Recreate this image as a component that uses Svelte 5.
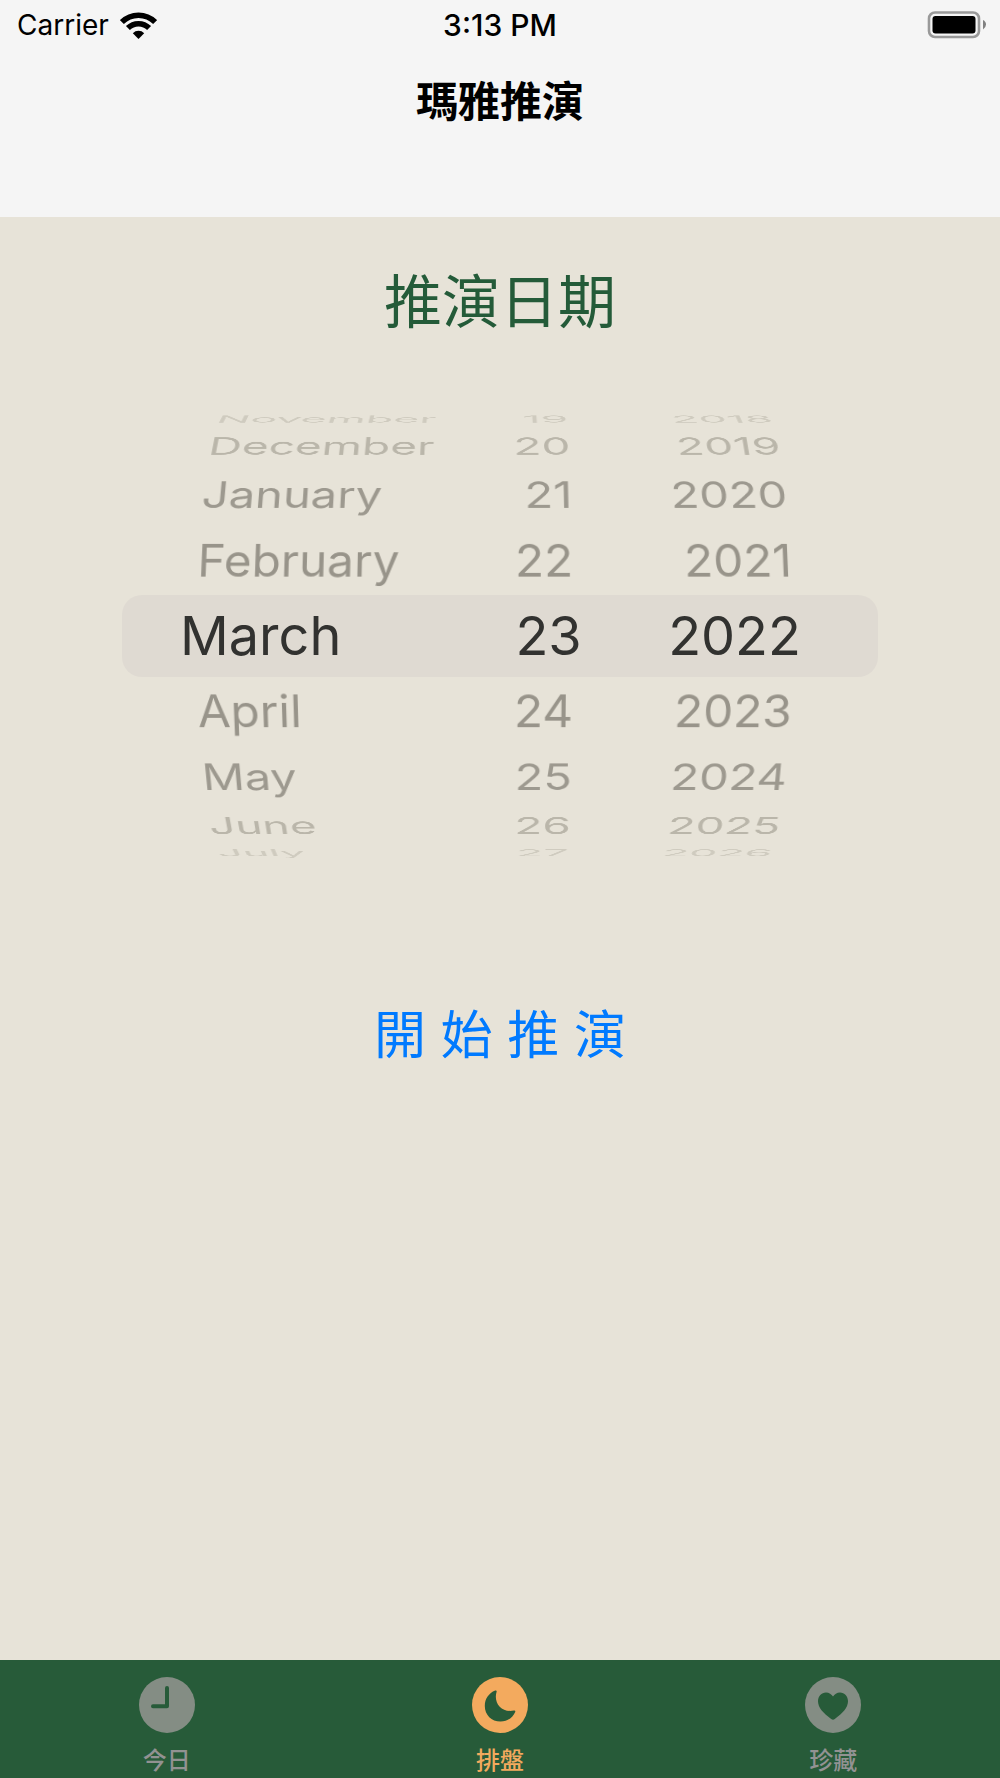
<script>
  const columns = [
    {
      name: 'month',
      label: 'Month',
      items: ['November', 'December', 'January', 'February', 'March', 'April', 'May', 'June', 'July'],
    },
    {
      name: 'day',
      label: 'Day',
      items: ['19', '20', '21', '22', '23', '24', '25', '26', '27'],
    },
    {
      name: 'year',
      label: 'Year',
      items: ['2018', '2019', '2020', '2021', '2022', '2023', '2024', '2025', '2026'],
    },
  ];

  const tabs = [
    { id: 'today', label: '今日' },
    { id: 'chart', label: '排盤' },
    { id: 'saved', label: '珍藏' },
  ];

  // Degrees between neighbouring rows on the picker drum
  const STEP = 18;

  let selected = $state({ month: 4, day: 4, year: 4 });
  let activeTab = $state('chart');
</script>

<div class="screen">
  <header>
    <div class="status">
      <div class="carrier">
        <span>Carrier</span>
        <svg class="wifi" viewBox="0 0 37 28" aria-hidden="true">
          <g fill="none" stroke="#000" stroke-width="5.6">
            <path d="M1.9 11.1A23.5 23.5 0 0 1 35.1 11.1" />
            <path d="M7.9 17.1A15 15 0 0 1 29.1 17.1" />
          </g>
          <path d="M18.5 28 12.8 22.2A8.1 8.1 0 0 1 24.2 22.2Z" />
        </svg>
      </div>
      <time>3:13 PM</time>
      <svg class="battery" viewBox="0 0 60 28" aria-hidden="true">
        <rect x="2" y="1.5" width="50" height="24.5" rx="6" fill="none" stroke="#999" stroke-width="2.6" />
        <rect x="5.500" y="5" width="43" height="17.6" rx="3" />
        <path d="M56 9Q59 10.500 59 13.500T56 18.500Z" fill="#808080" />
      </svg>
    </div>
    <h1>瑪雅推演</h1>
  </header>

  <main>
    <h2>推演日期</h2>

    <div class="picker">
      <div class="band"></div>
      <div class="drum">
        {#each columns as column}
          <div class="column {column.name}" role="radiogroup" aria-label={column.label}>
            {#each column.items as item, i}
              {@const offset = i - selected[column.name]}
              <label
                class="item away-{Math.min(Math.abs(offset), 5)}"
                style="--angle: {-offset * STEP}deg"
              >
                <input type="radio" name={column.name} value={i} bind:group={selected[column.name]} />
                {item}
              </label>
            {/each}
          </div>
        {/each}
      </div>
    </div>

    <button class="start" type="button">開 始 推 演</button>
  </main>

  <nav>
    {#each tabs as tab}
      <button
        type="button"
        class="tab"
        class:active={activeTab === tab.id}
        aria-current={activeTab === tab.id ? 'page' : undefined}
        onclick={() => (activeTab = tab.id)}
      >
        <svg viewBox="0 0 56 56" aria-hidden="true">
          <circle class="disc" cx="28" cy="28" r="28" />
          {#if tab.id === 'today'}
            <path class="line" d="M28 11V29.3H14" />
          {:else if tab.id === 'chart'}
            <path
              class="cut"
              d="M23.2 13.6C24.3 13.1 24.9 13.8 24.6 14.8C21.2 26 29.5 36.2 42 33.6C43 33.4 43.6 34 43.2 34.9C40.4 41 35 44.5 28.5 44.5C19.5 44.5 12.8 37.8 12.8 28.9C12.8 22 16.8 16.2 23.2 13.6Z"
            />
          {:else}
            <path
              class="cut"
              d="M28 42.7C27.4 42.7 26.8 42.3 26.2 41.9C18.5 36.4 13 30.6 13 24.2C13 19 16.5 15.4 21 15.4C24 15.4 26.6 17 28 19.6C29.4 17 32 15.4 35 15.4C39.5 15.4 43 19 43 24.2C43 30.6 37.5 36.4 29.8 41.9C29.2 42.3 28.6 42.7 28 42.7Z"
            />
          {/if}
        </svg>
        <span>{tab.label}</span>
      </button>
    {/each}
  </nav>
</div>

<style>
  :global(body) {
    margin: 0;
  }

  .screen {
    display: flex;
    flex-direction: column;
    min-height: 100vh;
    background: #e7e3d8;
    color: #000;
    font-family: Inter, 'Noto Sans CJK TC', sans-serif;
  }

  header {
    box-sizing: border-box;
    min-height: 217px;
    background: #f5f5f5;
  }

  .status {
    display: grid;
    grid-template-columns: 1fr auto 1fr;
    align-items: center;
    height: 50px;
    padding: 0 13px;
    font-size: 28px;
    line-height: 50px;
  }

  .carrier {
    display: flex;
    align-items: center;
    gap: 11px;
    padding-left: 4px;
  }

  .wifi {
    width: 37px;
    height: 28px;
  }

  time {
    font-size: 30px;
    font-weight: 500;
  }

  .battery {
    width: 60px;
    height: 28px;
    justify-self: end;
  }

  h1 {
    margin: 22px 0 0;
    font-size: 42px;
    line-height: 60px;
    font-weight: 700;
    text-align: center;
  }

  main {
    display: flex;
    flex: 1;
    flex-direction: column;
    align-items: center;
    padding-top: 43px;
  }

  h2 {
    margin: 0;
    color: #245b39;
    font-size: 58px;
    line-height: 84px;
    font-weight: 400;
  }

  .picker {
    display: grid;
    align-items: center;
    box-sizing: border-box;
    width: 100%;
    height: 444px;
    margin-top: 70px;
    padding: 0 122px;
  }

  .band,
  .drum {
    grid-area: 1 / 1;
  }

  .band {
    height: 82px;
    border-radius: 20px;
    background: #dfdad2;
  }

  .drum {
    display: grid;
    grid-template-columns: 5fr 2fr 4fr;
    column-gap: 8px;
    padding: 0 85px 0 74px;
    perspective: 2280px;
    perspective-origin: 378px 50%;
  }

  .column {
    display: grid;
    justify-items: end;
    align-items: center;
    height: 82px;
    transform-style: preserve-3d;
  }

  .month {
    justify-items: start;
  }

  .item {
    grid-area: 1 / 1;
    color: #98948a;
    font-size: 48px;
    line-height: 82px;
    white-space: nowrap;
    cursor: pointer;
    transform: translateZ(-245px) rotateX(var(--angle)) translateZ(245px);
  }

  .item input {
    position: absolute;
    margin: 0;
    opacity: 0;
    pointer-events: none;
  }

  .away-0 {
    margin: 0 -8px 0 -16px;
    color: #323230;
    font-size: 54px;
  }

  .away-2 {
    color: #9d998f;
  }

  .away-3 {
    color: #bab6aa;
  }

  .away-4 {
    color: #cfcbbf;
  }

  .away-5 {
    visibility: hidden;
  }

  .start {
    margin-top: 138px;
    padding: 0;
    border: 0;
    background: none;
    color: #007aff;
    font: inherit;
    font-size: 52px;
    line-height: 80px;
    cursor: pointer;
  }

  nav {
    display: grid;
    grid-template-columns: repeat(3, 1fr);
    height: 118px;
    background: #275b39;
  }

  .tab {
    display: flex;
    flex-direction: column;
    align-items: center;
    gap: 13px;
    padding: 17px 0 0;
    border: 0;
    background: none;
    color: #929292;
    font: inherit;
    font-size: 24px;
    line-height: 30px;
    font-weight: 500;
    cursor: pointer;
  }

  .tab svg {
    width: 56px;
    height: 56px;
  }

  .disc {
    fill: #848d84;
  }

  .line {
    fill: none;
    stroke: #275b39;
    stroke-width: 4;
    stroke-linecap: round;
    stroke-linejoin: round;
  }

  .cut {
    fill: #275b39;
  }

  .active {
    color: #f3aa5e;
  }

  .active .disc {
    fill: #f3aa5e;
  }
</style>
